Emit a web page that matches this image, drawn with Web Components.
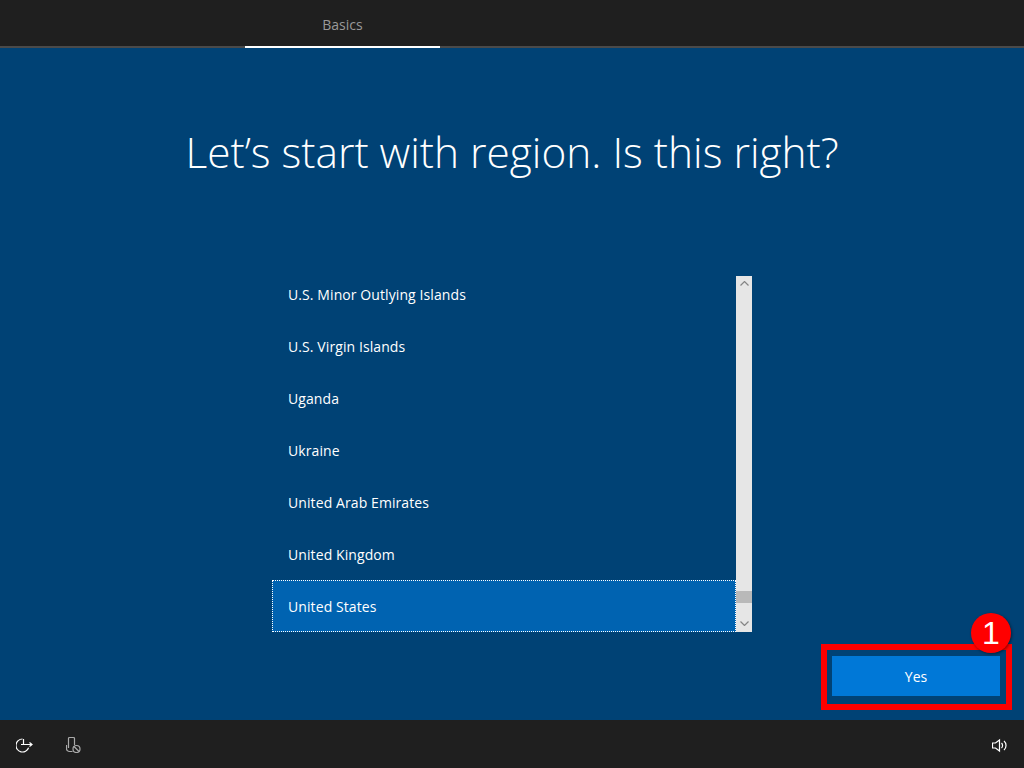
<!DOCTYPE html>
<html lang="en">
<head>
<meta charset="utf-8">
<title>Basics</title>
<style>
  html, body { margin: 0; height: 100%; background: #004275; }
  body { font-family: "Open Sans", "Liberation Sans", sans-serif; }
</style>
</head>
<body>
<oobe-screen>
  <oobe-header slot="header" label="Basics"></oobe-header>
  <h-title slot="title">Let’s start with region. Is this right?</h-title>
  <region-list slot="list">
    <region-item>U.S. Minor Outlying Islands</region-item>
    <region-item>U.S. Virgin Islands</region-item>
    <region-item>Uganda</region-item>
    <region-item>Ukraine</region-item>
    <region-item>United Arab Emirates</region-item>
    <region-item>United Kingdom</region-item>
    <region-item selected>United States</region-item>
  </region-list>
  <yes-button slot="action">Yes</yes-button>
  <oobe-footer slot="footer"></oobe-footer>
</oobe-screen>

<script>
class OobeScreen extends HTMLElement {
  constructor() {
    super();
    this.shadowDOM = this.attachShadow({ mode: "open" });
    this.shadowDOM.innerHTML = `
      <style>
        :host {
          display: flex;
          flex-direction: column;
          width: 1024px;
          height: 768px;
          background: #004275;
          overflow: hidden;
        }
        main {
          flex: 1;
          display: flex;
          flex-direction: column;
          align-items: center;
          min-height: 0;
        }
        .list { margin-top: 92px; }
        .action {
          align-self: flex-end;
          margin: 12px 12px 0 0;
        }
      </style>
      <slot name="header"></slot>
      <main>
        <slot name="title"></slot>
        <div class="list"><slot name="list"></slot></div>
        <div class="action"><slot name="action"></slot></div>
      </main>
      <slot name="footer"></slot>`;
  }
}

class OobeHeader extends HTMLElement {
  constructor() {
    super();
    this.shadowDOM = this.attachShadow({ mode: "open" });
  }

  connectedCallback() {
    this.shadowDOM.innerHTML = `
      <style>
        :host {
          display: flex;
          height: 46px;
          background: #1f1f1f;
          border-bottom: 2px solid #4a4a4a;
        }
        .tab {
          box-sizing: border-box;
          width: 195px;
          height: 48px;
          margin-left: 245px;
          border-bottom: 2px solid #fff;
          color: #999;
          font: 14px "Open Sans", sans-serif;
          line-height: 49px;
          text-align: center;
        }
      </style>
      <div class="tab">${this.getAttribute("label")}</div>`;
  }
}

class HTitle extends HTMLElement {
  constructor() {
    super();
    this.shadowDOM = this.attachShadow({ mode: "open" });
    this.shadowDOM.innerHTML = `
      <style>
        :host {
          display: block;
          margin-top: 72px;
          height: 64px;
          color: #fff;
          font: 300 42.4px/64px "Open Sans", sans-serif;
          white-space: nowrap;
        }
      </style>
      <slot></slot>`;
  }
}

class RegionList extends HTMLElement {
  constructor() {
    super();
    this.shadowDOM = this.attachShadow({ mode: "open" });
    this.shadowDOM.innerHTML = `
      <style>
        :host {
          display: flex;
          width: 480px;
          height: 356px;
        }
        .rows {
          flex: 1;
          min-width: 0;
          display: flex;
          flex-direction: column;
          justify-content: flex-end;
          overflow: hidden;
        }
        .bar {
          width: 16px;
          background: #e6e6e6;
          display: flex;
          flex-direction: column;
          align-items: center;
        }
        .track { flex: 1; display: flex; flex-direction: column; justify-content: flex-end; width: 100%; }
        .thumb { height: 12px; background: #b9b9b9; margin-bottom: 18px; }
        svg { display: block; }
        .up { margin-top: 5px; }
        .down { margin-bottom: 6px; }
      </style>
      <div class="rows"><slot></slot></div>
      <div class="bar">
        <svg class="up" width="9" height="5" viewBox="0 0 9 5"><path d="M.5 4.500l4-4 4 4" fill="none" stroke="#858585" stroke-width="1.200"/></svg>
        <div class="track"><div class="thumb"></div></div>
        <svg class="down" width="9" height="5" viewBox="0 0 9 5"><path d="M.5 .5l4 4 4-4" fill="none" stroke="#858585" stroke-width="1.200"/></svg>
      </div>`;
  }
}

class RegionItem extends HTMLElement {
  constructor() {
    super();
    this.shadowDOM = this.attachShadow({ mode: "open" });
    this.shadowDOM.innerHTML = `
      <style>
        :host {
          display: flex;
          align-items: center;
          flex: none;
          box-sizing: border-box;
          height: 52px;
          padding: 0 16px;
          color: #fff;
          font: 14px "Open Sans", sans-serif;
          letter-spacing: .09px;
        }
        :host([selected]) {
          background: #0063b1;
          outline: 1px dotted #fff;
          outline-offset: -1px;
        }
      </style>
      <slot></slot>`;
  }
}

class YesButton extends HTMLElement {
  constructor() {
    super();
    this.shadowDOM = this.attachShadow({ mode: "open" });
    this.shadowDOM.innerHTML = `
      <style>
        :host {
          display: block;
          position: relative;
          box-sizing: border-box;
          width: 191px;
          height: 66px;
          padding: 6px 6px 8px 5px;
          border: 6px solid #f00;
        }
        button {
          display: block;
          width: 168px;
          height: 40px;
          border: 0;
          padding: 0;
          background: #0078d7;
          color: #fff;
          font: 14px "Open Sans", sans-serif;
        }
        .badge {
          position: absolute;
          left: 144px;
          top: -37px;
          width: 40px;
          height: 40px;
          border-radius: 50%;
          background: #f00;
          box-shadow: 1px 1px 3px rgba(0, 0, 0, .45);
          color: #fff;
          font: 32px/40px "Liberation Sans", sans-serif;
          text-align: center;
        }
      </style>
      <button><slot></slot></button>
      <div class="badge">1</div>`;
  }
}

class OobeFooter extends HTMLElement {
  constructor() {
    super();
    this.shadowDOM = this.attachShadow({ mode: "open" });
    this.shadowDOM.innerHTML = `
      <style>
        :host {
          display: flex;
          align-items: center;
          height: 48px;
          padding: 0 17px 0 16px;
          background: #1f1f1f;
        }
        svg { display: block; fill: none; stroke: #fff; stroke-width: 1.200; }
        .mic { margin-left: 33px; stroke: #aaa; }
        .sound { margin-left: auto; }
      </style>
      <svg width="17" height="18" viewBox="0 0 17 18">
        <path d="M6.500 4A6.500 6.500 0 1 0 12.600 12.700"/>
        <path d="M7.500 4v5.500M5 9.500h11M13.500 7.500l2.500 2-2.500 2"/>
      </svg>
      <svg class="mic" width="16" height="18" viewBox="0 0 16 18">
        <path d="M8.500 10V3.500a1 1 0 0 0-1-1h-4a1 1 0 0 0-1 1V13"/>
        <path d="M.5 10v3.500a3 3 0 0 0 3 3h3"/>
        <circle cx="10.500" cy="14" r="3.500"/>
        <path d="M8 11.500l5 5"/>
      </svg>
      <svg class="sound" width="15" height="18" viewBox="0 0 15 18">
        <path d="M.5 8h3l4-3v11l-4-3h-3z"/>
        <path d="M9.500 8a3.500 3.500 0 0 1 0 5M12 6a6 6 0 0 1 0 9"/>
      </svg>`;
  }
}

customElements.define("oobe-screen", OobeScreen);
customElements.define("oobe-header", OobeHeader);
customElements.define("h-title", HTitle);
customElements.define("region-list", RegionList);
customElements.define("region-item", RegionItem);
customElements.define("yes-button", YesButton);
customElements.define("oobe-footer", OobeFooter);
</script>
</body>
</html>
